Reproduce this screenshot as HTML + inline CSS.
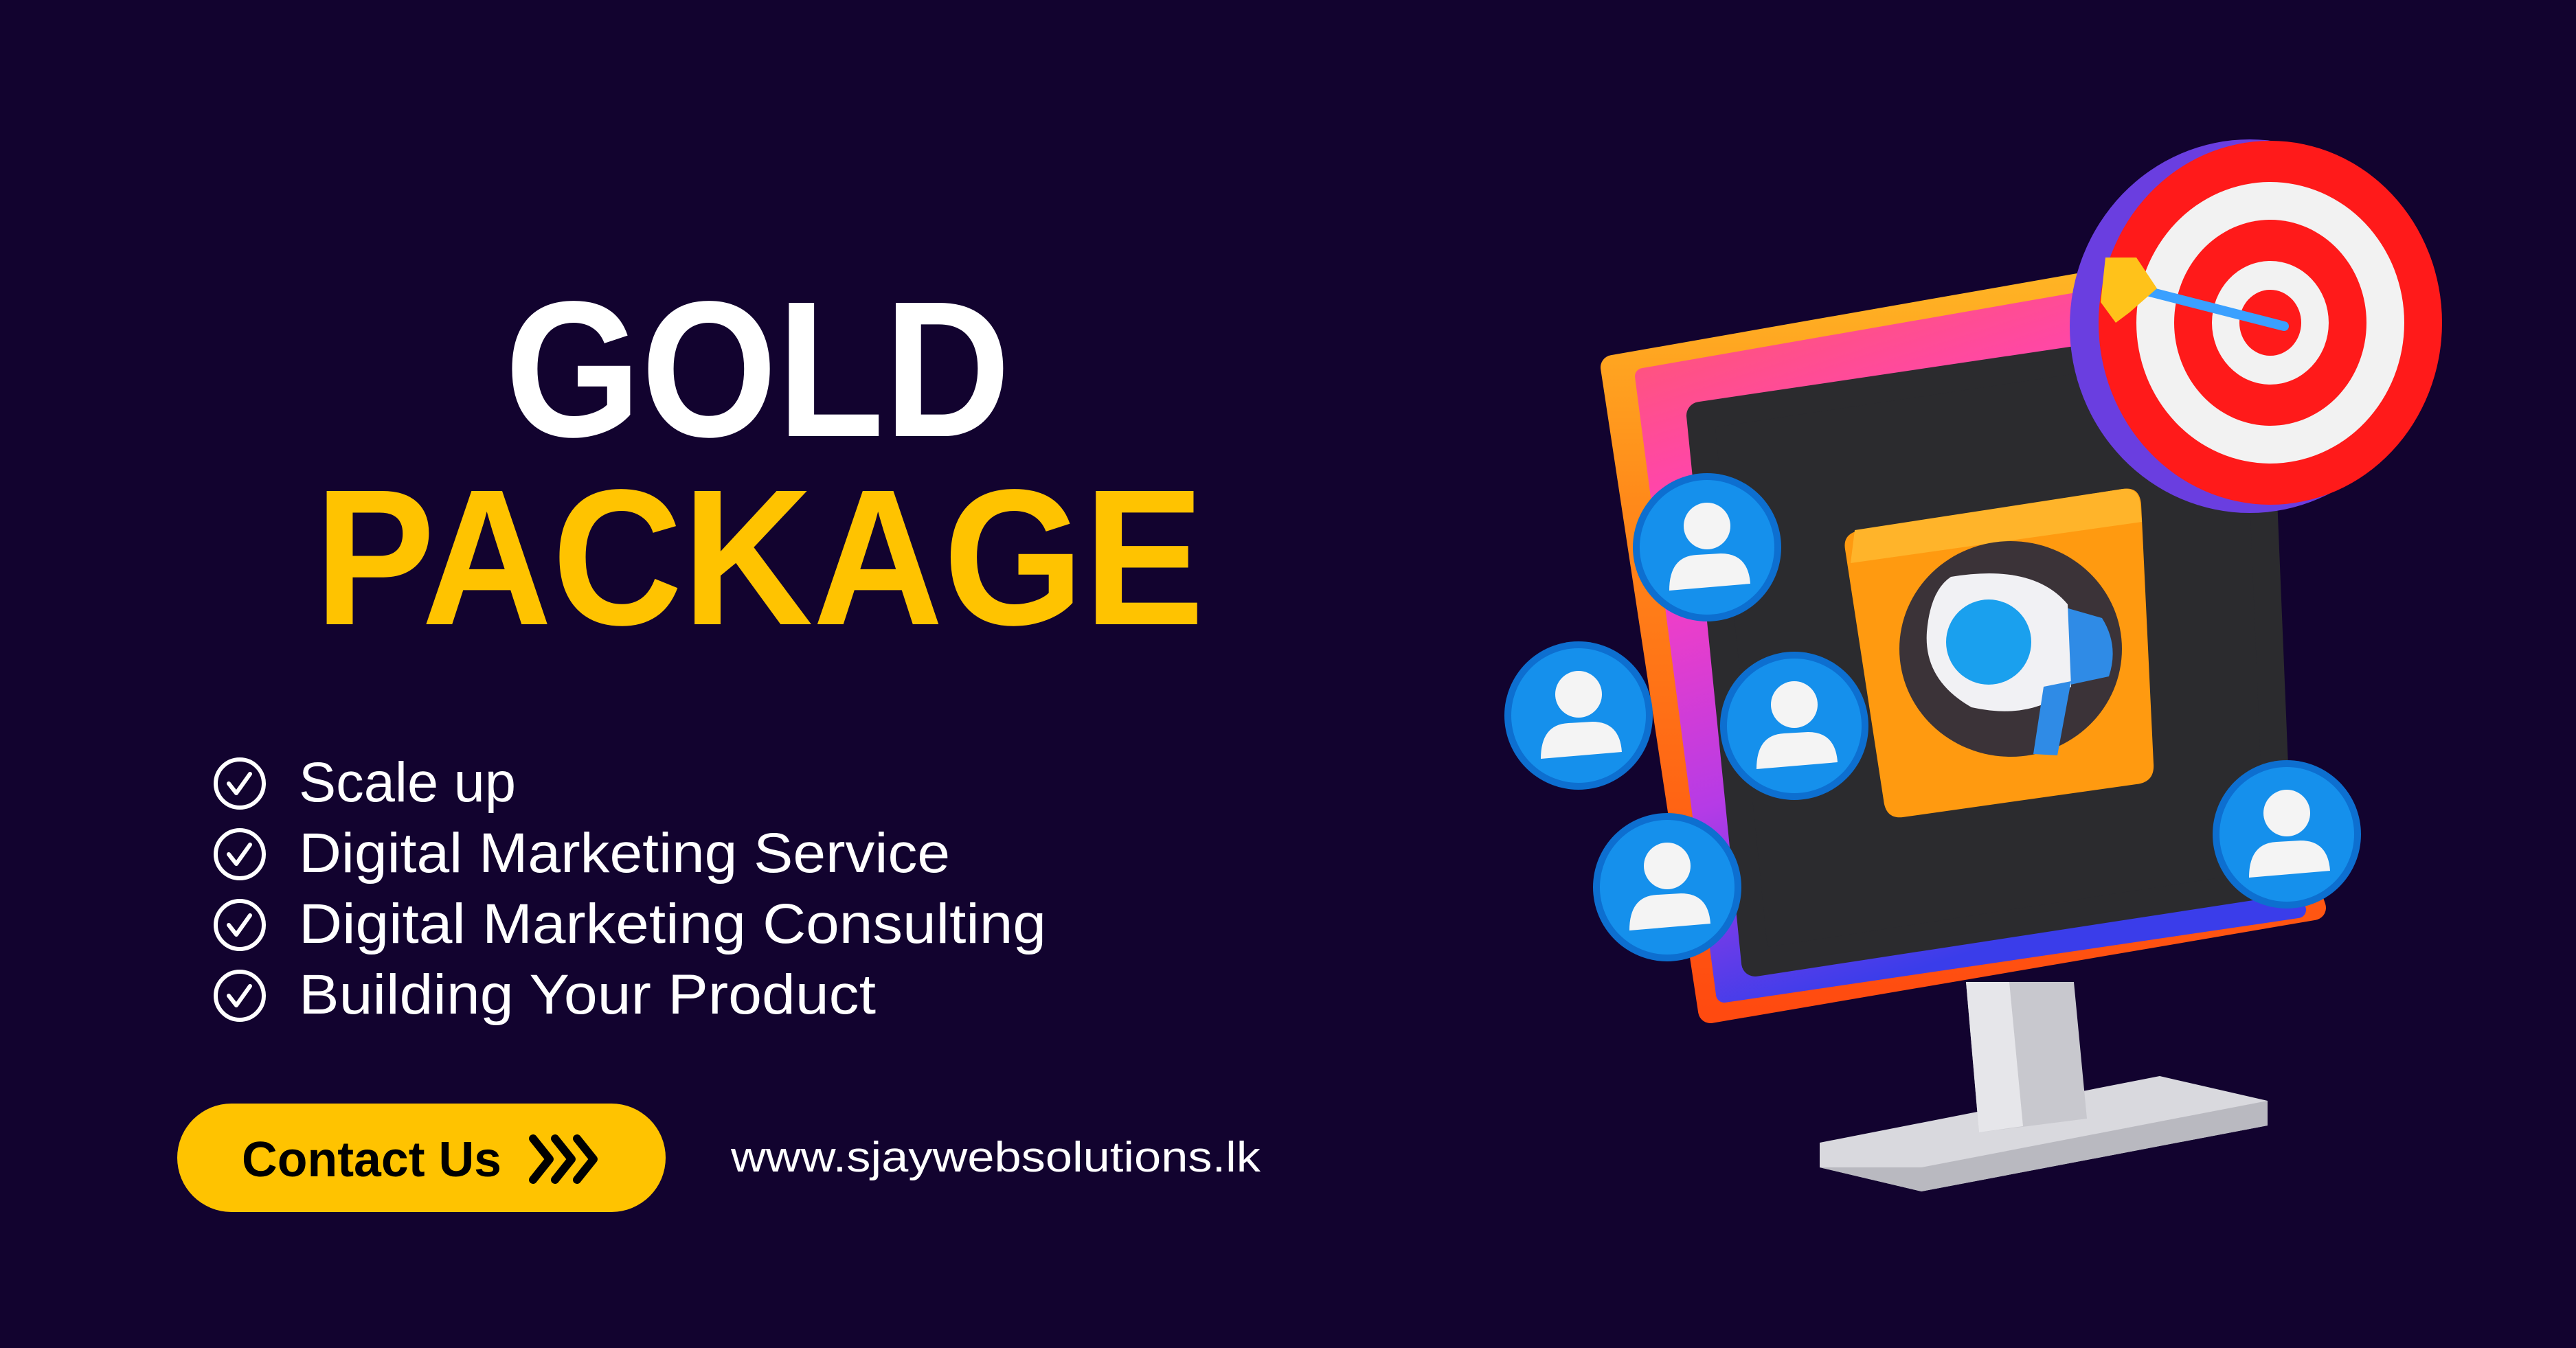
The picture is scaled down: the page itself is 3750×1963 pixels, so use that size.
<!DOCTYPE html>
<html><head><meta charset="utf-8"><style>
html,body{margin:0;padding:0;background:#12032f;}
svg{display:block}
</style></head><body>
<svg width="3750" height="1963" viewBox="0 0 3750 1963" xmlns="http://www.w3.org/2000/svg">
<defs>
<linearGradient id="ring" x1="0" y1="0" x2="0.3" y2="1">
<stop offset="0" stop-color="#ff5a6a"/>
<stop offset="0.35" stop-color="#ff3fbf"/>
<stop offset="0.7" stop-color="#b53be6"/>
<stop offset="1" stop-color="#3a3dea"/>
</linearGradient>
<linearGradient id="outer" x1="0" y1="0" x2="0" y2="1">
<stop offset="0" stop-color="#ffb324"/>
<stop offset="0.3" stop-color="#ff8a1a"/>
<stop offset="1" stop-color="#ff4a10"/>
</linearGradient>
</defs>
<rect width="3750" height="1963" fill="#12032f"/>
<g font-family="Liberation Sans, sans-serif">
<text x="735" y="635" font-size="282" font-weight="bold" fill="#fff" textLength="736" lengthAdjust="spacingAndGlyphs">GOLD</text>
<text x="458" y="909" font-size="282" font-weight="bold" fill="#ffc300" textLength="1295" lengthAdjust="spacingAndGlyphs">PACKAGE</text>
<g fill="#fff" font-size="82">
<text x="435" y="1167" textLength="316" lengthAdjust="spacingAndGlyphs">Scale up</text>
<text x="435" y="1270" textLength="948" lengthAdjust="spacingAndGlyphs">Digital Marketing Service</text>
<text x="435" y="1373" textLength="1088" lengthAdjust="spacingAndGlyphs">Digital Marketing Consulting</text>
<text x="435" y="1476" textLength="840" lengthAdjust="spacingAndGlyphs">Building Your Product</text>
</g>
<g fill="none" stroke="#fff" stroke-width="6" stroke-linecap="round" stroke-linejoin="round">
<circle cx="349" cy="1141" r="35"/><path d="M333 1141l11 14 20-28"/>
<circle cx="349" cy="1244" r="35"/><path d="M333 1244l11 14 20-28"/>
<circle cx="349" cy="1347" r="35"/><path d="M333 1347l11 14 20-28"/>
<circle cx="349" cy="1450" r="35"/><path d="M333 1450l11 14 20-28"/>
</g>
<rect x="258" y="1607" width="711" height="158" rx="79" fill="#ffc300"/>
<text x="352" y="1713" font-size="72" font-weight="bold" fill="#000" textLength="378" lengthAdjust="spacingAndGlyphs">Contact Us</text>
<g fill="none" stroke="#000" stroke-width="12" stroke-linecap="round" stroke-linejoin="round">
<path d="M776 1658l24 30-24 30M808 1658l24 30-24 30M840 1658l24 30-24 30"/>
</g>
<text x="1064" y="1706" font-size="62" fill="#fff" textLength="771" lengthAdjust="spacingAndGlyphs">www.sjaywebsolutions.lk</text>
</g>

<!-- stand -->
<path d="M2649 1664L3144 1567L3301 1603L3301 1639L2797 1735L2649 1700Z" fill="#d9d9de"/>
<path d="M2649 1700L2797 1735L3301 1639L3301 1603L2797 1700Z" fill="#b9b9c0"/>
<path d="M2862 1430L3019 1430L3038 1629L2881 1649Z" fill="#c8c8ce"/>
<path d="M2862 1430L2925 1430L2945 1640L2881 1649Z" fill="#e6e6ea"/>
<!-- frame depth -->
<path d="M2348 535L3060 410L3368 1322L2490 1472Z" fill="url(#outer)" stroke="url(#outer)" stroke-width="36" stroke-linejoin="round"/>
<!-- ring -->
<path d="M2392 548L3080 428L3345 1325L2510 1448Z" fill="url(#ring)" stroke="url(#ring)" stroke-width="24" stroke-linejoin="round"/>
<!-- screen -->
<path d="M2475 605L3285 485L3318 1285L2555 1402Z" fill="#2b2b2e" stroke="#2b2b2e" stroke-width="40" stroke-linejoin="round"/>
<!-- orange square -->
<path d="M2710 772L3090 712Q3115 708 3117 735L3135 1112Q3137 1139 3110 1142L2770 1190Q2745 1193 2742 1165L2686 800Q2682 776 2710 772Z" fill="#ff9a10"/>
<path d="M2700 772L3090 712Q3112 710 3115 730L3118 760L2694 820Z" fill="#ffb42a"/>
<ellipse cx="2927" cy="945" rx="162" ry="157" fill="#3b3338"/>
<path d="M2990 880L3060 900Q3085 940 3070 985L3000 1000Z" fill="#2f8be6"/>
<path d="M2840 840Q2960 820 3010 880L3015 1000Q2960 1050 2870 1030Q2800 990 2805 920Q2810 860 2840 840Z" fill="#f1f1f4"/>
<path d="M2975 1000L3015 992L2995 1100L2960 1098Z" fill="#2f8be6"/>
<circle cx="2895" cy="935" r="62" fill="#1aa0ee"/>
<!-- target -->
<ellipse cx="3275" cy="475" rx="262" ry="272" fill="#6a3ee0"/>
<ellipse cx="3305" cy="470" rx="250" ry="265" fill="#ff1a1a"/>
<ellipse cx="3305" cy="470" rx="195" ry="205" fill="#f2f2f2"/>
<ellipse cx="3305" cy="470" rx="140" ry="150" fill="#ff1a1a"/>
<ellipse cx="3305" cy="470" rx="85" ry="90" fill="#f2f2f2"/>
<ellipse cx="3305" cy="470" rx="45" ry="48" fill="#ff1a1a"/>
<path d="M3110 420L3325 475" stroke="#3aa0ff" stroke-width="14" stroke-linecap="round"/>
<path d="M3065 375L3110 375L3140 420L3100 455L3080 470L3058 440Z" fill="#ffc21a"/>
<!-- people -->
<g>
<circle cx="2485" cy="797" r="108" fill="#0d6fd0"/><circle cx="2485" cy="797" r="98" fill="#1590ec"/>
<circle cx="2485" cy="766" r="34" fill="#f4f4f4"/><path d="M2430 860Q2430 810 2470 808L2505 806Q2545 806 2548 850Z" fill="#f4f4f4"/>
<circle cx="2298" cy="1042" r="108" fill="#0d6fd0"/><circle cx="2298" cy="1042" r="98" fill="#1590ec"/>
<circle cx="2298" cy="1011" r="34" fill="#f4f4f4"/><path d="M2243 1105Q2243 1055 2283 1053L2318 1051Q2358 1051 2361 1095Z" fill="#f4f4f4"/>
<circle cx="2612" cy="1057" r="108" fill="#0d6fd0"/><circle cx="2612" cy="1057" r="98" fill="#1590ec"/>
<circle cx="2612" cy="1026" r="34" fill="#f4f4f4"/><path d="M2557 1120Q2557 1070 2597 1068L2632 1066Q2672 1066 2675 1110Z" fill="#f4f4f4"/>
<circle cx="2427" cy="1292" r="108" fill="#0d6fd0"/><circle cx="2427" cy="1292" r="98" fill="#1590ec"/>
<circle cx="2427" cy="1261" r="34" fill="#f4f4f4"/><path d="M2372 1355Q2372 1305 2412 1303L2447 1301Q2487 1301 2490 1345Z" fill="#f4f4f4"/>
<circle cx="3329" cy="1215" r="108" fill="#0d6fd0"/><circle cx="3329" cy="1215" r="98" fill="#1590ec"/>
<circle cx="3329" cy="1184" r="34" fill="#f4f4f4"/><path d="M3274 1278Q3274 1228 3314 1226L3349 1224Q3389 1224 3392 1268Z" fill="#f4f4f4"/>
</g>
</svg>
</body></html>
